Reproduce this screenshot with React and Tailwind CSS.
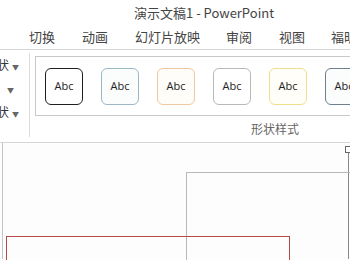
const styles = [
  { border: "border-[#1e1e1e]", bg: "bg-white" },
  { border: "border-[#9cb8c4]", bg: "bg-[#fbfdfd]" },
  { border: "border-[#eec9a0]", bg: "bg-[#fffdfa]" },
  { border: "border-[#b8b8b8]", bg: "bg-white" },
  { border: "border-[#f0e08c]", bg: "bg-[#fffef8]" },
  { border: "border-[#6f7f8c]", bg: "bg-[#fbfcfc]" },
];

const tabs = [
  { label: "切换", cls: "ml-[29px]" },
  { label: "动画", cls: "ml-[27px]" },
  { label: "幻灯片放映", cls: "ml-[27px]" },
  { label: "审阅", cls: "ml-[26px]" },
  { label: "视图", cls: "ml-[27px]" },
  { label: "福昕阅读器", cls: "ml-[26px]" },
];

function Caret() {
  return <span className="inline-block ml-[3px] text-[7px] text-[#666] align-middle">▼</span>;
}

export default function App() {
  return (
    <div
      className="w-[350px] h-[260px] overflow-hidden bg-white text-[#444]"
      style={{ fontFamily: '"Noto Sans CJK SC", "Noto Sans", sans-serif' }}
    >
      {/* title bar */}
      <div className="h-[25px] flex items-center pl-[134px] text-[13px] text-[#444] whitespace-nowrap">
        演示文稿1 - PowerPoint
      </div>

      {/* tabs */}
      <div className="h-[25px] flex items-center text-[13px] text-[#444] whitespace-nowrap border-b border-[#d6d6d6]">
        {tabs.map((t) => (
          <span key={t.label} className={`${t.cls} shrink-0`}>
            {t.label}
          </span>
        ))}
      </div>

      {/* ribbon */}
      <div className="h-[93px] flex border-b border-[#d6d6d6]">
        <div className="w-[29px] shrink-0 flex flex-col pt-[4px] text-[12px] leading-[22px] text-[#333]">
          <div className="-ml-[3px] whitespace-nowrap">状<Caret /></div>
          <div className="pl-[4px]"><Caret /></div>
          <div className="-ml-[3px] whitespace-nowrap">状<Caret /></div>
        </div>
        <div className="w-px h-[84px] mt-[3px] bg-[#dcdcdc] shrink-0" />
        <div className="flex-1 flex flex-col pl-[5px] pt-[6px] min-w-0">
          <div className="h-[61px] border border-[#c8c8c8] border-r-0 flex items-center gap-[18px] pl-[9px] overflow-hidden">
            {styles.map((s, i) => (
              <div
                key={i}
                className={`w-[38px] h-[37px] shrink-0 rounded-[6px] border ${s.border} ${s.bg} flex items-center justify-center text-[11px] text-[#222]`}
                style={{ fontFamily: '"Open Sans", "Noto Sans", sans-serif' }}
              >
                Abc
              </div>
            ))}
          </div>
          <div className="h-[26px] flex items-center pl-[216px] text-[12px] text-[#666] whitespace-nowrap">
            形状样式
          </div>
        </div>
      </div>

      {/* workspace */}
      <div className="relative h-[116px] bg-[#fdfdfe]">
        <div className="absolute left-[2px] top-0 bottom-0 w-px bg-[#c4c4c4]" />
        <div className="absolute left-[345px] top-[3px] w-[7px] h-[7px] border border-[#666] bg-white" />
        <div className="absolute left-[348px] top-[10px] bottom-0 w-px bg-[#8a8a8a]" />
        <div className="absolute left-[186px] top-[29px] w-[200px] h-[120px] border border-[#b9b9b9]" />
        <div className="absolute left-[6px] top-[93px] w-[284px] h-[60px] border border-[#b54848]" />
      </div>
    </div>
  );
}
